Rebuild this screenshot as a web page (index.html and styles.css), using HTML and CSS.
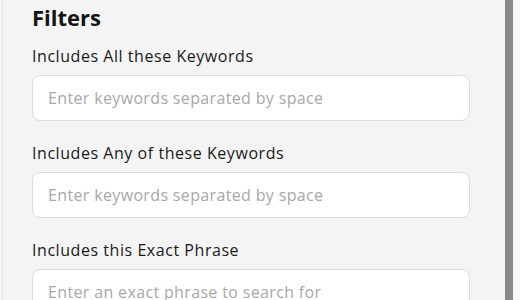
FILE: index.html
```html
<!DOCTYPE html>
<html lang="en">
<head>
<meta charset="utf-8">
<title>Filters</title>
<link rel="stylesheet" href="styles.css">
</head>
<body>
<div class="page">
  <aside class="panel">
    <h2 class="title">Filters</h2>
    <div class="field">
      <label class="label" for="all">Includes All these Keywords</label>
      <input class="input" id="all" type="text" placeholder="Enter keywords separated by space">
    </div>
    <div class="field">
      <label class="label" for="any">Includes Any of these Keywords</label>
      <input class="input" id="any" type="text" placeholder="Enter keywords separated by space">
    </div>
    <div class="field">
      <label class="label" for="exact">Includes this Exact Phrase</label>
      <input class="input" id="exact" type="text" placeholder="Enter an exact phrase to search for">
    </div>
  </aside>
  <div class="scrollbar"><div class="thumb"></div></div>
</div>
</body>
</html>
```
FILE: styles.css
```css
html, body {
  margin: 0;
  padding: 0;
  height: 100%;
  overflow: hidden;
}
body {
  background: #f5f5f5;
  font-family: "Open Sans", "Noto Sans", "Liberation Sans", sans-serif;
  color: #1f1f1f;
}
.page {
  display: flex;
  height: 300px;
}
.panel {
  flex: 1;
  background: #f4f4f4;
  border-left: 1px solid #e4e4e4;
  margin-left: 2px;
  padding: 0 35px 0 29px;
}
.title {
  margin: 2px 0 12px;
  font-size: 22px;
  font-weight: 700;
  line-height: 30px;
  color: #151515;
}
.field {
  display: flex;
  flex-direction: column;
  margin-bottom: 20px;
}
.label {
  font-size: 16px;
  line-height: 24px;
  letter-spacing: 0.55px;
  margin-bottom: 7px;
  color: #1a1a1a;
}
.input {
  box-sizing: border-box;
  height: 46px;
  width: 100%;
  border: 1px solid #dcdcdc;
  border-radius: 8px;
  background: #fff;
  padding: 0 15px;
  font-family: inherit;
  font-size: 16px;
  letter-spacing: 0.35px;
  color: #222;
  outline: none;
}
.input::placeholder {
  color: #a8a8a8;
}
.scrollbar {
  width: 15px;
  background: #f8f8f8;
  display: flex;
}
.thumb {
  width: 8px;
  background: #8a8a8a;
}
```
